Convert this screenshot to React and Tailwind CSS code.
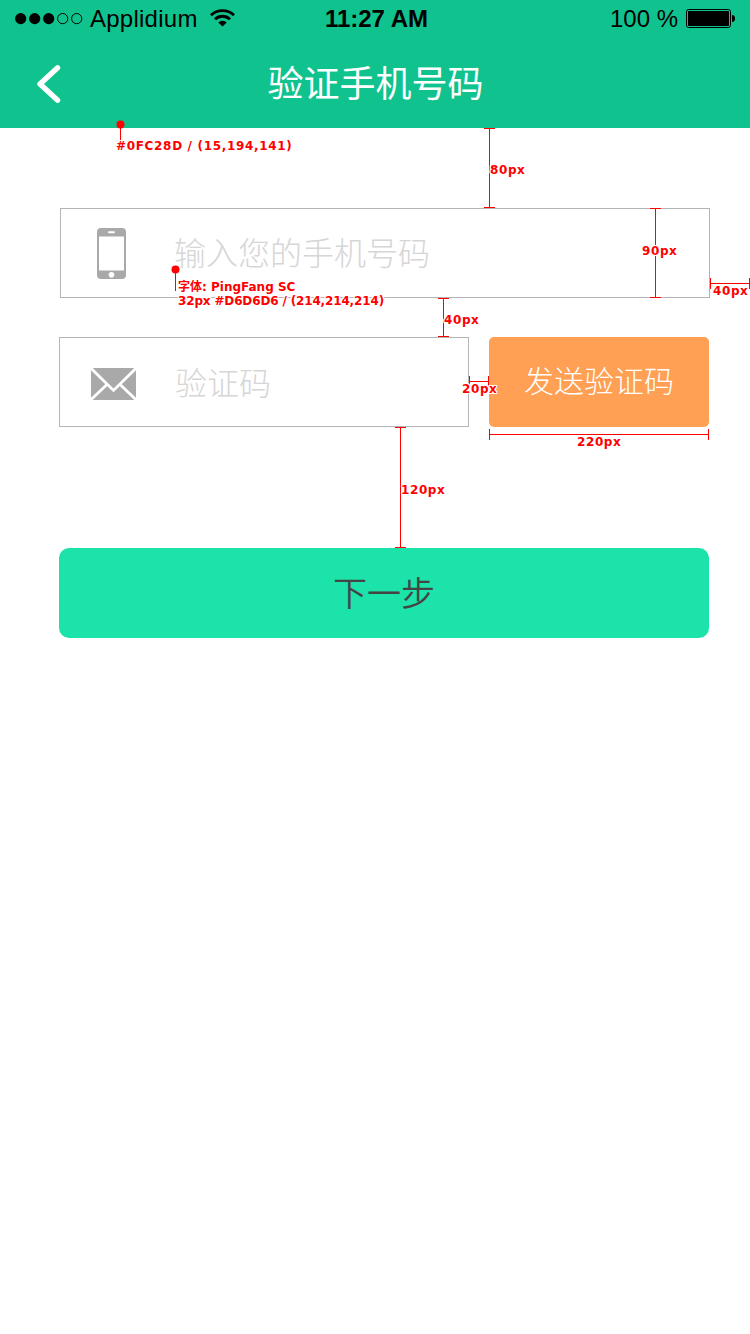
function Signal() {
  return (
    <svg width="68" height="12" viewBox="0 0 68 12">
      <circle cx="5.7" cy="5.6" r="5.6" />
      <circle cx="19.7" cy="5.6" r="5.6" />
      <circle cx="33.7" cy="5.6" r="5.6" />
      <circle cx="47.7" cy="5.6" r="5.1" fill="none" stroke="black" />
      <circle cx="61.7" cy="5.6" r="5.1" fill="none" stroke="black" />
    </svg>
  );
}

function Wifi() {
  return (
    <svg width="25" height="18" viewBox="0 0 25 18" fill="none" stroke="black" strokeWidth="2.9">
      <path d="M1 6.2 A16.8 16.8 0 0 1 24 6.2" />
      <path d="M5 10.3 A10.8 10.8 0 0 1 20 10.3" />
      <path d="M12.5 17.6 L8.3 13.5 A6 6 0 0 1 16.7 13.5 Z" fill="black" stroke="none" />
    </svg>
  );
}

function Battery() {
  return (
    <svg width="49" height="19" viewBox="0 0 49 19">
      <rect x="0.5" y="0.5" width="44" height="18" rx="2.2" fill="none" stroke="black" />
      <rect x="2" y="2" width="41" height="15" rx="0.8" />
      <path d="M46 6 C48.2 6 49 7.5 49 9.5 C49 11.5 48.2 13 46 13 Z" />
    </svg>
  );
}

function StatusBar() {
  return (
    <div className='grid h-10 grid-cols-3 pr-[15px] pl-[15px] font-["Liberation_Sans",sans-serif] text-[24px] leading-[38px] text-black'>
      <div className="flex h-[37px] items-center">
        <Signal />
        <span className="ml-[7px] tracking-[0.25px] whitespace-nowrap">Applidium</span>
        <span className="mb-[2px] ml-[12px]"><Wifi /></span>
      </div>
      <div className="pl-[3px] text-center font-bold">11:27 AM</div>
      <div className="flex h-[37px] items-center justify-end gap-2">
        <span>100 %</span>
        <Battery />
      </div>
    </div>
  );
}

function Phone() {
  return (
    <svg width="29" height="51" viewBox="0 0 29 51">
      <rect width="29" height="51" rx="4" fill="#a9a9a9" />
      <rect x="2" y="8.5" width="25" height="34" fill="white" />
      <rect x="11" y="3.2" width="7" height="2" rx="1" fill="white" />
      <circle cx="14.5" cy="46.7" r="2.8" fill="white" />
    </svg>
  );
}

function Mail() {
  return (
    <svg className="mt-1" width="45" height="32" viewBox="0 0 45 32">
      <rect width="45" height="32" fill="#a9a9a9" />
      <path d="M-1 -0.8 L22.5 22.4 L46 -0.8 M-1 32.6 L16.2 16.2 M46 32.6 L28.8 16.2" fill="none" stroke="white" strokeWidth="2.8" />
    </svg>
  );
}

const lines = [
  "M489.5 128V208M484 128.5H495M484 207.5H495",
  "M655.5 208V298M650 208.5H661M650 297.5H661",
  "M443.5 298V337M438 298.5H449M438 336.5H449",
  "M710 283.5H750M710.5 278V289M749.5 278V289",
  "M469 381.5H489M469.5 376V387M488.5 376V387",
  "M489 434.5H709M489.5 429V440M708.5 429V440",
  "M400.5 427V548M395 427.5H406M395 547.5H406",
  "M120.5 125V140M175.5 270V291",
];

function Note({ className, children }) {
  return (
    <span
      className={
        'absolute text-[12px] leading-[14px] font-bold whitespace-pre text-[#ff0000] [text-shadow:1px_0_white,-1px_0_white,0_1px_white,0_-1px_white,1px_1px_white,-1px_-1px_white,1px_-1px_white,-1px_1px_white] font-["DejaVu_Sans","Noto_Sans_CJK_SC",sans-serif] ' +
        className
      }
    >
      {children}
    </span>
  );
}

function Annotations() {
  return (
    <div className="pointer-events-none absolute inset-0">
      <svg className="absolute inset-0" width="750" height="1334" fill="none" stroke="#ff0000">
        {lines.map((d) => <path key={d} d={d} />)}
        <circle cx="120.5" cy="124.5" r="4" fill="#ff0000" stroke="none" />
        <circle cx="175.5" cy="269.5" r="4" fill="#ff0000" stroke="none" />
      </svg>
      <Note className="top-[139px] left-[116px] tracking-[0.67px]">#0FC28D / (15,194,141)</Note>
      <Note className="top-[163px] left-[490px] tracking-[0.6px]">80px</Note>
      <Note className="top-[244px] left-[642px] tracking-[0.6px]">90px</Note>
      <Note className="top-[284px] left-[713px] tracking-[0.6px]">40px</Note>
      <Note className="top-[280px] left-[178px] tracking-[0px]">字体: PingFang SC</Note>
      <Note className="top-[294px] left-[178px] tracking-[-0.15px]">32px #D6D6D6 / (214,214,214)</Note>
      <Note className="top-[313px] left-[444px] tracking-[0.6px]">40px</Note>
      <Note className="top-[382px] left-[462px] tracking-[0.6px]">20px</Note>
      <Note className="top-[435px] left-[577px] tracking-[0.6px]">220px</Note>
      <Note className="top-[483px] left-[401px] tracking-[0.6px]">120px</Note>
    </div>
  );
}

export default function App() {
  return (
    <div className='relative h-[1334px] w-[750px] overflow-hidden bg-white font-["Noto_Sans_CJK_SC",sans-serif]'>
      <header className="h-32 bg-[#10c28e]">
        <StatusBar />
        <div className="grid h-[88px] grid-cols-[100px_1fr_100px] items-center text-white">
          <svg className="ml-[37px]" width="24" height="38" viewBox="0 0 24 38" fill="none" stroke="white" strokeWidth="5.3" strokeLinecap="round" strokeLinejoin="round">
            <path d="M20.6 2.8 L3 19 L20.6 35.2" />
          </svg>
          <h1 className="pb-1.5 pl-px text-center text-[36px] leading-[82px] font-normal">验证手机号码</h1>
        </div>
      </header>
      <main className="pt-20 pr-10 pl-[59px] font-light">
        <div className="ml-px flex h-[90px] items-center border border-[#b4b4b4] pl-9 text-[32px] text-[#d6d6d6]">
          <Phone />
          <span className="ml-[48px] pb-[3px] leading-[85px]">输入您的手机号码</span>
        </div>
        <div className="mt-[39px] flex gap-5">
          <div className="flex h-[90px] w-[410px] items-center border border-[#b4b4b4] pl-[31px] text-[32px] text-[#d6d6d6]">
            <Mail />
            <span className="ml-[39px] pb-[2px] leading-[86px]">验证码</span>
          </div>
          <button className="h-[90px] w-[220px] rounded-[5px] bg-[#ffa054] pb-[5px] text-[30px] text-white">发送验证码</button>
        </div>
        <button className="mt-[121px] h-[90px] w-[650px] rounded-[10px] bg-[#1ce3a9] pb-1 text-[34px] font-[350] text-[#444444]">下一步</button>
      </main>
      <Annotations />
    </div>
  );
}
